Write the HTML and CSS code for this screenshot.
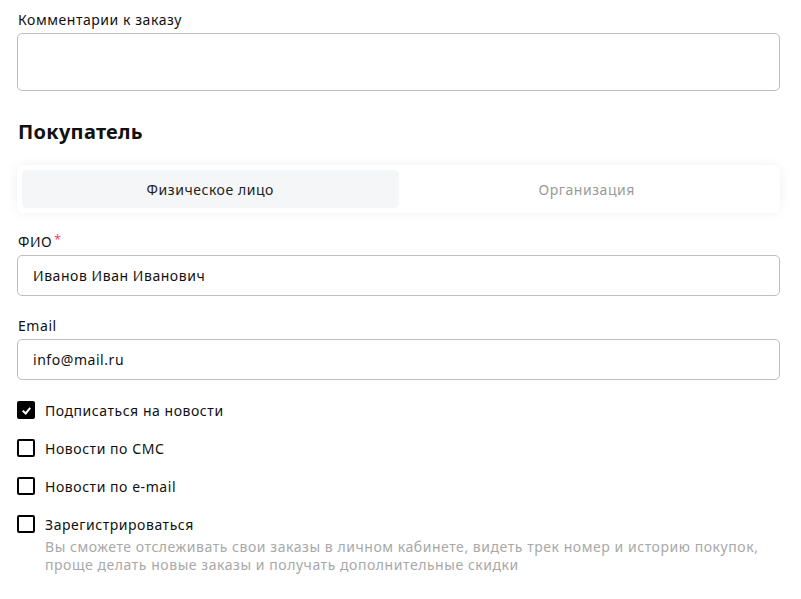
FILE: index.html
```html
<!DOCTYPE html>
<html lang="ru">
<head>
  <meta charset="UTF-8" />
  <meta name="viewport" content="width=device-width, initial-scale=1.0"/>
  <title>Оформление заказа</title>
  <link rel="stylesheet" href="styles.css">
</head>
<body>

<div class="order-form">
    <div class="field">
        <label class="field-label" for="comment">Комментарии к заказу</label>
        <textarea id="comment" class="field-area"></textarea>
    </div>

    <h2 class="section-title">Покупатель</h2>

    <div class="switch">
        <button class="switch-btn active">Физическое лицо</button>
        <button class="switch-btn">Организация</button>
    </div>

    <div class="field">
        <label class="field-label" for="fio">ФИО<span class="req">*</span></label>
        <input type="text" id="fio" class="field-input" value="Иванов Иван Иванович">
    </div>

    <div class="field">
        <label class="field-label" for="email">Email</label>
        <input type="text" id="email" class="field-input" value="info@mail.ru">
    </div>

    <!-- Checkboxes -->
    <div class="checks">
        <label class="check">
            <input type="checkbox" checked>
            <span class="box"></span>
            <span class="check-text">Подписаться на новости</span>
        </label>
        <label class="check">
            <input type="checkbox">
            <span class="box"></span>
            <span class="check-text">Новости по СМС</span>
        </label>
        <label class="check">
            <input type="checkbox">
            <span class="box"></span>
            <span class="check-text">Новости по e-mail</span>
        </label>
        <label class="check">
            <input type="checkbox">
            <span class="box"></span>
            <span class="check-text">Зарегистрироваться</span>
        </label>
        <p class="hint">Вы сможете отслеживать свои заказы в личном кабинете, видеть трек номер и историю покупок, проще делать новые заказы и получать дополнительные скидки</p>
    </div>
</div>

</body>
</html>
```

FILE: styles.css
```css
body {
    font-family: "Noto Sans", "Open Sans", sans-serif;
    background-color: #fff;
    color: #111;
    letter-spacing: 0.55px;
    margin: 0;
    padding: 0;
}

.order-form {
    padding: 11px 21px 20px 17px;
}

.field {
    margin-bottom: 21px;
}

.field-label {
    display: flex;
    align-items: flex-start;
    height: 18px;
    font-size: 14px;
    line-height: 18px;
    margin: 0 0 4px 1px;
}

.req {
    color: #f0436b;
    margin-left: 2px;
    font-size: 12px;
    line-height: 14px;
}

.field-area,
.field-input {
    display: block;
    box-sizing: border-box;
    width: 100%;
    border: 1px solid #bdbdbd;
    border-radius: 5px;
    font-family: inherit;
    font-size: 14px;
    letter-spacing: inherit;
    color: #111;
    outline: none;
}

.field-area {
    height: 58px;
    resize: none;
}

.field-input {
    height: 41px;
    padding: 0 15px;
}

.section-title {
    font-size: 20px;
    font-weight: 700;
    letter-spacing: 0.3px;
    margin: 28px 0 20px 1px;
    line-height: 26px;
}

.switch {
    display: flex;
    padding: 5px;
    background: #fff;
    border-radius: 6px;
    box-shadow: 0 0 12px rgba(0,0,0,0.06);
    margin-bottom: 20px;
}

.switch-btn {
    flex: 1;
    height: 38px;
    border: none;
    background: transparent;
    border-radius: 5px;
    font-family: inherit;
    font-size: 14px;
    letter-spacing: inherit;
    color: #9a9a9a;
    cursor: pointer;
}

.switch-btn.active {
    background: #f5f6f8;
    color: #222;
}

.check {
    display: flex;
    align-items: center;
    gap: 10px;
    height: 18px;
    margin-bottom: 20px;
    font-size: 14px;
    cursor: pointer;
}

.check input {
    display: none;
}

.box {
    box-sizing: border-box;
    width: 18px;
    height: 18px;
    border: 2px solid #000;
    border-radius: 2px;
    position: relative;
}

.check input:checked + .box {
    background: #000;
}

.check input:checked + .box::after {
    content: "";
    position: absolute;
    left: 5px;
    top: 3px;
    width: 3px;
    height: 6px;
    border: solid #fff;
    border-width: 0 2px 2px 0;
    transform: rotate(40deg);
}

.check:last-of-type {
    margin-bottom: 5px;
}

.hint {
    margin: 0 0 0 28px;
    font-size: 14px;
    line-height: 18px;
    color: #a8a8a8;
}
```
